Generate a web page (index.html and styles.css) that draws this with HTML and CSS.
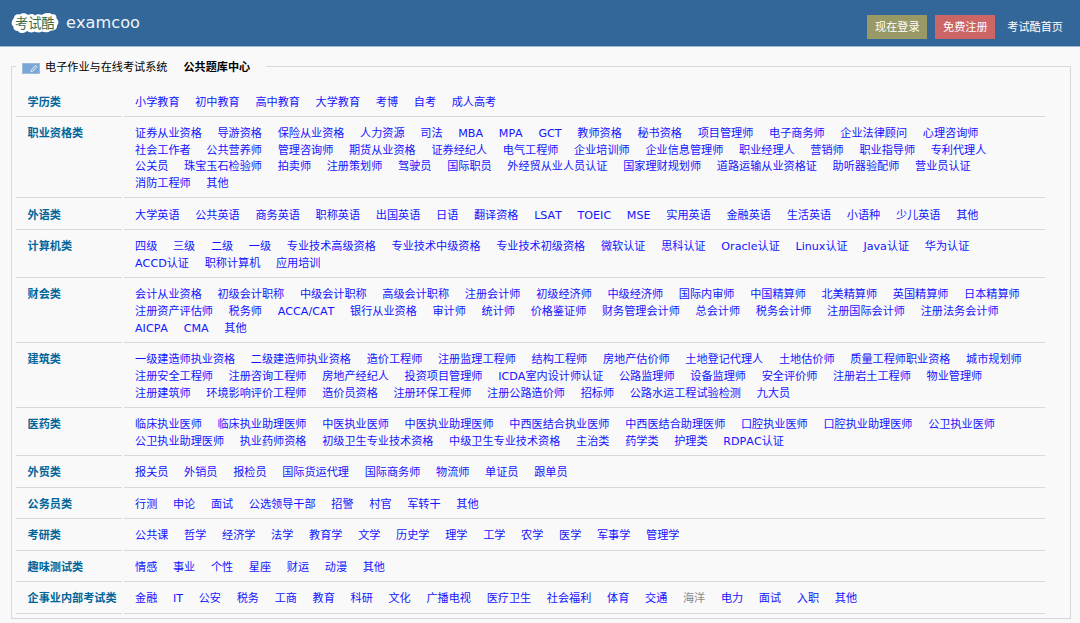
FILE: index.html
```html
<!DOCTYPE html>
<html lang="zh-CN">
<head>
  <meta charset="UTF-8" />
  <meta name="viewport" content="width=device-width, initial-scale=1.0"/>
  <title>公共题库中心 - 考试酷</title>
  <link rel="stylesheet" href="styles.css">
</head>
<body>

  <div class="header">
    <a class="logo" href="#">
      <svg class="logo-mark" width="48" height="22" viewBox="0 0 48 22">
        <path class="cloud" d="M3 6C3 3 6 1.5 9 2.5C11 0.5 15 1 17 3C20 1.5 23 2 24 3.5C26 2 29 2 31 3C34 0.5 39 0.5 41 2.5C44 1.5 46 4 45.5 6.5C48 8.5 48 12 46 13.5C46.5 17 43 19 40 18.5C37 21 33 20.5 31 19.5C28 21 25 20.5 23.5 19.5C21 21 18 20.5 16 19C13 22 8 21.5 7 19C4 19 2 17 2.5 14.5C0 13 0 9 3 6Z"/>
        <text class="logo-text" x="4" y="15.7">考试酷</text>
      </svg>
      <span class="logo-name">examcoo</span>
    </a>
    <div class="nav">
      <a class="btn login" href="#">现在登录</a>
      <a class="btn register" href="#">免费注册</a>
      <a class="home" href="#">考试酷首页</a>
    </div>
  </div>

  <fieldset class="panel">
    <legend class="title">
      <svg class="title-icon" width="18" height="11" viewBox="0 0 18 11">
        <rect x="0.5" y="0.5" width="17" height="10" fill="#7aa7d8" stroke="#9dbcdc"/>
        <path d="M9 8.6L9.6 6.6L13.4 2.4L15 3.8L11.2 8Z" fill="#8fb3dc" stroke="#e6f0fa" stroke-width="0.8"/>
      </svg>
      <span class="site">电子作业与在线考试系统</span>
      <b>公共题库中心</b>
    </legend>

    <div class="row">
      <div class="name">学历类</div>
      <div class="links"><a href="#">小学教育</a><a href="#">初中教育</a><a href="#">高中教育</a><a href="#">大学教育</a><a href="#">考博</a><a href="#">自考</a><a href="#">成人高考</a></div>
    </div>
    <div class="row">
      <div class="name">职业资格类</div>
      <div class="links"><a href="#">证券从业资格</a><a href="#">导游资格</a><a href="#">保险从业资格</a><a href="#">人力资源</a><a href="#">司法</a><a href="#">MBA</a><a href="#">MPA</a><a href="#">GCT</a><a href="#">教师资格</a><a href="#">秘书资格</a><a href="#">项目管理师</a><a href="#">电子商务师</a><a href="#">企业法律顾问</a><a href="#">心理咨询师</a><a href="#">社会工作者</a><a href="#">公共营养师</a><a href="#">管理咨询师</a><a href="#">期货从业资格</a><a href="#">证券经纪人</a><a href="#">电气工程师</a><a href="#">企业培训师</a><a href="#">企业信息管理师</a><a href="#">职业经理人</a><a href="#">营销师</a><a href="#">职业指导师</a><a href="#">专利代理人</a><a href="#">公关员</a><a href="#">珠宝玉石检验师</a><a href="#">拍卖师</a><a href="#">注册策划师</a><a href="#">驾驶员</a><a href="#">国际职员</a><a href="#">外经贸从业人员认证</a><a href="#">国家理财规划师</a><a href="#">道路运输从业资格证</a><a href="#">助听器验配师</a><a href="#">营业员认证</a><a href="#">消防工程师</a><a href="#">其他</a></div>
    </div>
    <div class="row">
      <div class="name">外语类</div>
      <div class="links"><a href="#">大学英语</a><a href="#">公共英语</a><a href="#">商务英语</a><a href="#">职称英语</a><a href="#">出国英语</a><a href="#">日语</a><a href="#">翻译资格</a><a href="#">LSAT</a><a href="#">TOEIC</a><a href="#">MSE</a><a href="#">实用英语</a><a href="#">金融英语</a><a href="#">生活英语</a><a href="#">小语种</a><a href="#">少儿英语</a><a href="#">其他</a></div>
    </div>
    <div class="row">
      <div class="name">计算机类</div>
      <div class="links"><a href="#">四级</a><a href="#">三级</a><a href="#">二级</a><a href="#">一级</a><a href="#">专业技术高级资格</a><a href="#">专业技术中级资格</a><a href="#">专业技术初级资格</a><a href="#">微软认证</a><a href="#">思科认证</a><a href="#">Oracle认证</a><a href="#">Linux认证</a><a href="#">Java认证</a><a href="#">华为认证</a><a href="#">ACCD认证</a><a href="#">职称计算机</a><a href="#">应用培训</a></div>
    </div>
    <div class="row">
      <div class="name">财会类</div>
      <div class="links"><a href="#">会计从业资格</a><a href="#">初级会计职称</a><a href="#">中级会计职称</a><a href="#">高级会计职称</a><a href="#">注册会计师</a><a href="#">初级经济师</a><a href="#">中级经济师</a><a href="#">国际内审师</a><a href="#">中国精算师</a><a href="#">北美精算师</a><a href="#">英国精算师</a><a href="#">日本精算师</a><a href="#">注册资产评估师</a><a href="#">税务师</a><a href="#">ACCA/CAT</a><a href="#">银行从业资格</a><a href="#">审计师</a><a href="#">统计师</a><a href="#">价格鉴证师</a><a href="#">财务管理会计师</a><a href="#">总会计师</a><a href="#">税务会计师</a><a href="#">注册国际会计师</a><a href="#">注册法务会计师</a><a href="#">AICPA</a><a href="#">CMA</a><a href="#">其他</a></div>
    </div>
    <div class="row">
      <div class="name">建筑类</div>
      <div class="links"><a href="#">一级建造师执业资格</a><a href="#">二级建造师执业资格</a><a href="#">造价工程师</a><a href="#">注册监理工程师</a><a href="#">结构工程师</a><a href="#">房地产估价师</a><a href="#">土地登记代理人</a><a href="#">土地估价师</a><a href="#">质量工程师职业资格</a><a href="#">城市规划师</a><a href="#">注册安全工程师</a><a href="#">注册咨询工程师</a><a href="#">房地产经纪人</a><a href="#">投资项目管理师</a><a href="#">ICDA室内设计师认证</a><a href="#">公路监理师</a><a href="#">设备监理师</a><a href="#">安全评价师</a><a href="#">注册岩土工程师</a><a href="#">物业管理师</a><a href="#">注册建筑师</a><a href="#">环境影响评价工程师</a><a href="#">造价员资格</a><a href="#">注册环保工程师</a><a href="#">注册公路造价师</a><a href="#">招标师</a><a href="#">公路水运工程试验检测</a><a href="#">九大员</a></div>
    </div>
    <div class="row">
      <div class="name">医药类</div>
      <div class="links"><a href="#">临床执业医师</a><a href="#">临床执业助理医师</a><a href="#">中医执业医师</a><a href="#">中医执业助理医师</a><a href="#">中西医结合执业医师</a><a href="#">中西医结合助理医师</a><a href="#">口腔执业医师</a><a href="#">口腔执业助理医师</a><a href="#">公卫执业医师</a><a href="#">公卫执业助理医师</a><a href="#">执业药师资格</a><a href="#">初级卫生专业技术资格</a><a href="#">中级卫生专业技术资格</a><a href="#">主治类</a><a href="#">药学类</a><a href="#">护理类</a><a href="#">RDPAC认证</a></div>
    </div>
    <div class="row">
      <div class="name">外贸类</div>
      <div class="links"><a href="#">报关员</a><a href="#">外销员</a><a href="#">报检员</a><a href="#">国际货运代理</a><a href="#">国际商务师</a><a href="#">物流师</a><a href="#">单证员</a><a href="#">跟单员</a></div>
    </div>
    <div class="row">
      <div class="name">公务员类</div>
      <div class="links"><a href="#">行测</a><a href="#">申论</a><a href="#">面试</a><a href="#">公选领导干部</a><a href="#">招警</a><a href="#">村官</a><a href="#">军转干</a><a href="#">其他</a></div>
    </div>
    <div class="row">
      <div class="name">考研类</div>
      <div class="links"><a href="#">公共课</a><a href="#">哲学</a><a href="#">经济学</a><a href="#">法学</a><a href="#">教育学</a><a href="#">文学</a><a href="#">历史学</a><a href="#">理学</a><a href="#">工学</a><a href="#">农学</a><a href="#">医学</a><a href="#">军事学</a><a href="#">管理学</a></div>
    </div>
    <div class="row">
      <div class="name">趣味测试类</div>
      <div class="links"><a href="#">情感</a><a href="#">事业</a><a href="#">个性</a><a href="#">星座</a><a href="#">财运</a><a href="#">动漫</a><a href="#">其他</a></div>
    </div>
    <div class="row">
      <div class="name">企事业内部考试类</div>
      <div class="links"><a href="#">金融</a><a href="#">IT</a><a href="#">公安</a><a href="#">税务</a><a href="#">工商</a><a href="#">教育</a><a href="#">科研</a><a href="#">文化</a><a href="#">广播电视</a><a href="#">医疗卫生</a><a href="#">社会福利</a><a href="#">体育</a><a href="#">交通</a><a href="#" class="off">海洋</a><a href="#">电力</a><a href="#">面试</a><a href="#">入职</a><a href="#">其他</a></div>
    </div>
  </fieldset>

</body>
</html>
```

FILE: styles.css
```css
* {
  box-sizing: border-box;
}

body {
  margin: 0;
  height: 623px;
  overflow: hidden;
  background-color: #f9f9f9;
  color: #000;
  font-family: Verdana, "DejaVu Sans", "Noto Sans CJK SC", sans-serif;
  font-size: 11.13px;
  line-height: 16.7px;
  font-kerning: none;
}

a {
  color: #1414ff;
  text-decoration: none;
}

a:hover {
  text-decoration: underline;
}

.header {
  display: flex;
  justify-content: space-between;
  height: 47px;
  padding: 0 17px 0 11px;
  background-color: #369;
  border-bottom: 1px solid #a3b9cf;
}

.logo {
  display: flex;
  align-items: center;
  gap: 7px;
  height: 45px;
  color: #f0f4f8;
}

.logo-mark .cloud {
  fill: #fff;
}

.logo-text {
  fill: #3d6b3d;
  font-family: "Noto Sans CJK SC", sans-serif;
  font-size: 13.2px;
}

.logo-name {
  font-size: 16.2px;
  line-height: 20px;
}

.nav {
  display: flex;
  align-items: flex-start;
  padding-top: 15px;
}

.nav a {
  color: #fff;
  line-height: 25px;
}

.btn {
  width: 60px;
  height: 24px;
  margin-right: 8px;
  text-align: center;
}

.login {
  background-color: #996;
}

.register {
  background-color: #c66;
}

.home {
  margin-left: 4px;
}

.panel {
  margin: 11px 9px 0 11px;
  padding: 0 25px 4px 4px;
  border: 1px solid #d8d8d8;
}

.title {
  display: flex;
  align-items: center;
  width: 250px;
  height: 17px;
  margin-left: 0;
  padding: 2px 0 0 6px;
  line-height: 17px;
}

.title-icon {
  margin: 1px 5px 0 0;
}

.site {
  margin-right: 16px;
}

.row {
  display: grid;
  grid-template-columns: 106px 1fr;
  column-gap: 1.5px;
}

.panel .row:nth-of-type(1) {
  margin-top: 10.4px;
}

.name,
.links {
  padding: 9.2px 0 4.6px 11.5px;
  border-bottom: 1px solid #d9d9d9;
}

.name {
  color: #069;
  font-weight: bold;
  white-space: nowrap;
}

.links {
  display: flex;
  flex-wrap: wrap;
}

.links a {
  margin-right: 15.7px;
  white-space: nowrap;
}

.links .off {
  color: #888;
}
```
